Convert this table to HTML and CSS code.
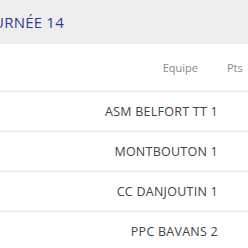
FILE: index.html
```html
<!DOCTYPE html>
<html lang="fr">
<head>
<meta charset="utf-8">
<link rel="stylesheet" href="styles.css">
</head>
<body>
<div class="panel">
  <div class="panel-head"><h2 class="title">JOURNÉE 14</h2></div>
  <div class="table">
    <div class="row head"><div class="team">Equipe</div><div class="pts">Pts</div></div>
    <div class="row"><div class="team">ASM BELFORT TT 1</div><div class="pts"></div></div>
    <div class="row"><div class="team">MONTBOUTON 1</div><div class="pts"></div></div>
    <div class="row"><div class="team">CC DANJOUTIN 1</div><div class="pts"></div></div>
    <div class="row"><div class="team">PPC BAVANS 2</div><div class="pts"></div></div>
  </div>
</div>
</body>
</html>
```
FILE: styles.css
```css
html, body { margin: 0; padding: 0; background: #fff; }
body { font-family: "Open Sans", "DejaVu Sans", sans-serif; overflow: hidden; }
.panel { width: 248px; }
.panel-head { background: #eeeeee; height: 44px; display: flex; align-items: center; }
.title { margin: 0 0 0 -23px; font-size: 15px; font-weight: 500; color: #2e3d94; white-space: nowrap; letter-spacing: 0.2px; }
.table { display: flex; flex-direction: column; }
.row { display: grid; grid-template-columns: 1fr 30px; height: 39px; align-items: center; border-bottom: 1px solid #e6e6e6; }
.row.head { height: 47px; grid-template-columns: 1fr 50px; }
.team { text-align: right; font-size: 12.5px; letter-spacing: 0.25px; color: #444; white-space: nowrap; }
.head .team, .head .pts { font-size: 11px; letter-spacing: 0; color: #888; }
.pts { padding-left: 29px; }
```
